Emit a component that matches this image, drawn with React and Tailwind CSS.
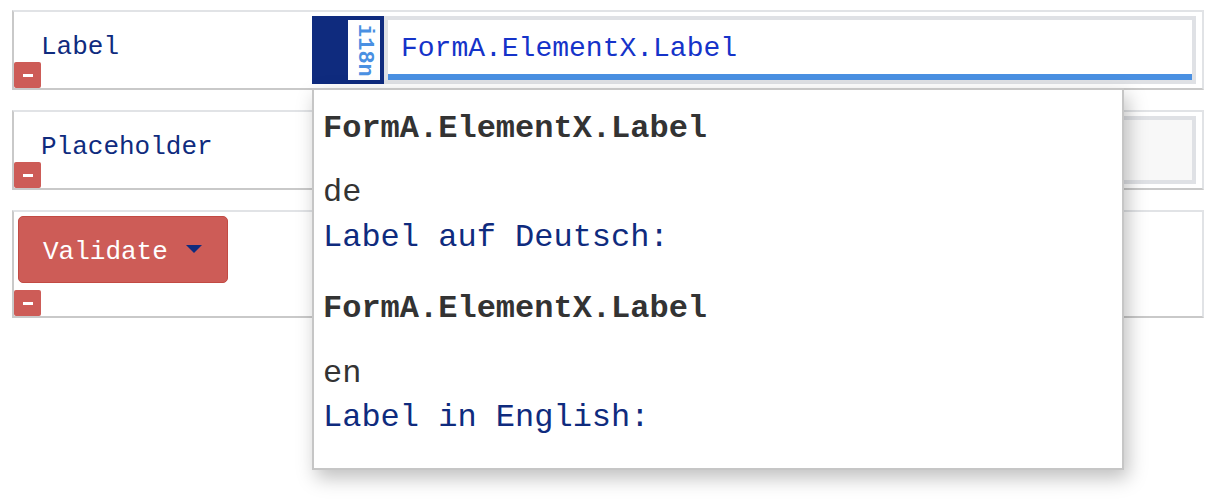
import React from "react";

const MONO = "font-['Liberation_Mono',monospace]";

function Minus() {
  return (
    <div className="w-[27px] h-[26px] bg-[#cd5c57] rounded-[2px] flex items-center justify-center">
      <span className="block w-[10px] h-[3px] bg-white" />
    </div>
  );
}

function Row({ children, left, className = "" }) {
  return (
    <div
      className={`flex border-2 border-t-[#e1e3e6] border-r-[#e1e3e6] border-b-[#c9c9c9] border-l-[#c9c9c9] bg-white ${className}`}
    >
      <div className="w-[298px] flex flex-col justify-between">{left}</div>
      <div className="flex-1 flex py-[4px] pr-[6px]">{children}</div>
    </div>
  );
}

export default function App() {
  return (
    <div className={`relative bg-white w-[1216px] h-[504px] pt-[10px] px-[12px] ${MONO}`}>
      <Row
        left={
          <>
            <div className="pt-[21px] pl-[27px] text-[26px] leading-[28px] text-[#0f2b7e]">Label</div>
            <Minus />
          </>
        }
      >
        <div className="w-[72px] h-[68px] bg-[#0f2b7e] flex justify-end p-[4px]">
          <div className="w-[32px] h-full bg-white flex items-center justify-center">
            <span className="[writing-mode:vertical-rl] text-[22px] leading-none font-bold text-[#4a90e2]">i18n</span>
          </div>
        </div>
        <div className="flex-1 h-[68px] border-4 border-[#dfe1e5]">
          <div className="h-full bg-white border-b-[6px] border-[#4a90e2] pl-[13px] pt-[13px] text-[28px] leading-[32px] text-[#1533c9]">
            FormA.ElementX.Label
          </div>
        </div>
      </Row>

      <Row
        className="mt-[20px]"
        left={
          <>
            <div className="pt-[21px] pl-[27px] text-[26px] leading-[28px] text-[#0f2b7e]">Placeholder</div>
            <Minus />
          </>
        }
      >
        <div className="flex-1 h-[68px] border-4 border-[#dfe1e5] bg-[#f8f8f8]" />
      </Row>

      <Row
        className="mt-[20px]"
        left={
          <>
            <div className="mt-[4px] ml-[4px] w-[210px] h-[67px] bg-[#cd5c57] border border-[#c24a43] rounded-[5px] flex items-center pl-[24px]">
              <span className="text-[26px] leading-[28px] text-white pt-[5px]">Validate</span>
              <svg className="ml-[18px] mb-[2px]" width="16" height="8" viewBox="0 0 16 8">
                <path d="M0 0H16L8 8Z" fill="#0f2b7e" />
              </svg>
            </div>
            <div className="mt-[7px]">
              <Minus />
            </div>
          </>
        }
      >
        <div className="w-[400px] h-[71px] border-2 border-[#d0d0d0] bg-white" />
      </Row>

      <div className="absolute left-[312px] top-[88px] w-[812px] h-[382px] bg-white border-2 border-[#c6c6c6] shadow-[4px_8px_18px_rgba(0,0,0,0.25)] pl-[9px] pt-[23px] text-[32px] leading-[32px]">
        <div className="font-bold text-[#333333]">FormA.ElementX.Label</div>
        <div className="mt-[32px] text-[#333333]">de</div>
        <div className="mt-[13px] text-[#0f2b7e]">Label auf Deutsch:</div>
        <div className="mt-[39px] font-bold text-[#333333]">FormA.ElementX.Label</div>
        <div className="mt-[33px] text-[#333333]">en</div>
        <div className="mt-[12px] text-[#0f2b7e]">Label in English:</div>
      </div>
    </div>
  );
}
